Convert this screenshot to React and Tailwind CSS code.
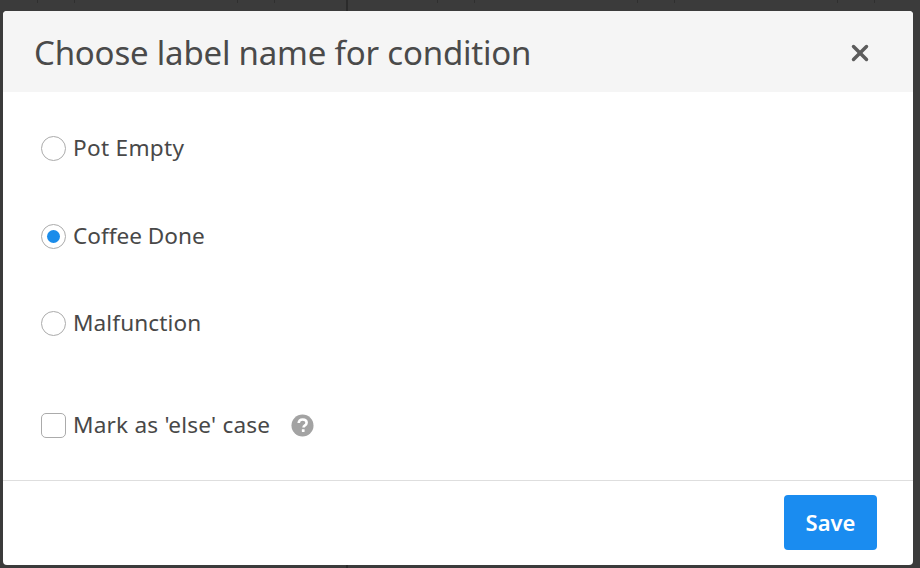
import React, { useState } from 'react';
import { X } from 'lucide-react';

const LABELS = [
  { name: 'Pot Empty', rowClass: 'h-[88px] tracking-[0.3px]' },
  { name: 'Coffee Done', rowClass: 'h-[88px]' },
  { name: 'Malfunction', rowClass: 'h-[86px] tracking-[0.1px]' },
];

// Round help badge with the question mark knocked out
function HelpIcon() {
  return (
    <svg viewBox="0 0 24 24" className="w-[23px] h-[23px] ml-[21px]" aria-hidden="true">
      <circle cx="12" cy="12" r="11.5" fill="#a3a3a3" />
      <path d="M8 9.4C8.2 7 9.9 5.7 12.2 5.7c2.4 0 4.1 1.4 4.1 3.4 0 1.6-.9 2.4-2 3.1-.9.6-1.2 1-1.2 1.9" fill="none" stroke="#fff" strokeWidth="2.7" />
      <rect x="11.3" y="15.8" width="2.9" height="2.9" rx="0.4" fill="#fff" />
    </svg>
  );
}

function Radio({ checked }) {
  return (
    <span className="w-[25px] h-[25px] rounded-full border border-[#ababab] bg-white flex items-center justify-center shrink-0">
      {checked && <span className="w-[13px] h-[13px] rounded-full bg-[#1a8cea]" />}
    </span>
  );
}

export default function App() {
  const [selected, setSelected] = useState('Coffee Done');
  const [isElse, setIsElse] = useState(false);

  return (
    <div className="w-[920px] h-[568px] bg-[#3b3b3b] bg-[linear-gradient(90deg,transparent_346px,#2b2b2b_346px,#2b2b2b_348px,transparent_348px),repeating-linear-gradient(90deg,transparent_0,transparent_37px,#2f2f2f_37px,#2f2f2f_38px,transparent_38px,transparent_74px,#2f2f2f_74px,#2f2f2f_75px,transparent_75px,transparent_200px)] bg-[length:100%_100%,100%_3px] bg-no-repeat pt-[11px] pl-[3px] pr-[7px] pb-[3px] overflow-hidden font-['Noto_Sans',sans-serif]">
      <div className="h-full bg-white rounded-[4px] overflow-hidden flex flex-col text-[#484848]">
        {/* Header */}
        <div className="h-[81px] shrink-0 bg-[#f5f5f5] pt-[2px] pl-[31px] pr-[40px] flex items-center justify-between">
          <h2 className="text-[33px] tracking-[-0.2px] text-[#4a4a4a]">Choose label name for condition</h2>
          <button className="text-[#5c5c5c]" aria-label="Close">
            <X size={26} strokeWidth={3.2} />
          </button>
        </div>

        {/* Options */}
        <div className="flex-1 pl-[38px] pt-[12px]">
          {LABELS.map(({ name, rowClass }) => (
            <label key={name} className={`flex items-center gap-[7px] text-[22.6px] cursor-pointer ${rowClass}`} onClick={() => setSelected(name)}>
              <Radio checked={selected === name} />
              <span>{name}</span>
            </label>
          ))}
          <div className="flex items-center h-[28px] mt-[45px] text-[22.6px] tracking-[0.2px]">
            <label className="flex items-center gap-[7px] cursor-pointer" onClick={() => setIsElse(v => !v)}>
              <span className={`w-[25px] h-[25px] rounded-[5px] border border-[#ababab] shrink-0 ${isElse ? 'bg-[#1a8cea]' : 'bg-white'}`} />
              <span>Mark as 'else' case</span>
            </label>
            <HelpIcon />
          </div>
        </div>

        {/* Footer */}
        <div className="h-[85px] shrink-0 border-t border-[#dedede] pt-[14px] pr-[36px] flex justify-end items-start">
          <button className="w-[93px] h-[55px] rounded-[4px] bg-[#1a8cf0] text-white text-[22px] font-semibold">Save</button>
        </div>
      </div>
    </div>
  );
}
